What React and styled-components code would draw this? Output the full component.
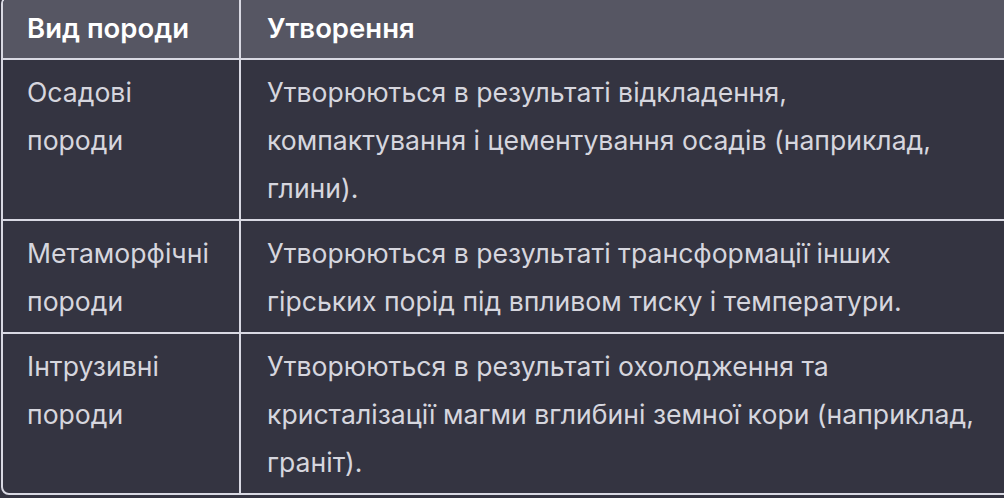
import React from 'react';
import styled, { createGlobalStyle } from 'styled-components';

const GlobalStyle = createGlobalStyle`
  html, body {
    margin: 0;
    padding: 0;
    background: #343441;
    overflow: hidden;
  }
  body {
    font-family: Inter, "Noto Sans", sans-serif;
  }
`;

const Page = styled.div`
  width: 1004px;
  height: 498px;
  overflow: hidden;
  padding-left: 1px;
  box-sizing: border-box;
`;

const Table = styled.table`
  width: 1040px;
  margin-top: -4px;
  border-collapse: separate;
  border-spacing: 0;
  border: 2px solid #d9d9e3;
  border-radius: 8px;
  overflow: hidden;
  table-layout: fixed;
  background: #343441;
`;

const HeadCell = styled.th`
  background: #565663;
  color: #ffffff;
  font-weight: 600;
  font-size: 27.5px;
  line-height: 48px;
  text-align: left;
  white-space: nowrap;
  padding: 6px 26px 6px ${p => (p.$first ? '24px' : '26px')};
  border-left: ${p => (p.$first ? 'none' : '2px solid #d9d9e3')};
`;

const Cell = styled.td`
  color: #d6d6de;
  font-size: 26.6px;
  line-height: 48px;
  vertical-align: top;
  white-space: nowrap;
  padding: 8px 26px 7px ${p => (p.$first ? '24px' : '26px')};
  border-top: 2px solid #d9d9e3;
  border-left: ${p => (p.$first ? 'none' : '2px solid #d9d9e3')};
`;

const Line = styled.span`
  display: block;
`;

const rows = [
  {
    kind: ['Осадові', 'породи'],
    text: [
      'Утворюються в результаті відкладення,',
      'компактування і цементування осадів (наприклад,',
      'глини).',
    ],
  },
  {
    kind: ['Метаморфічні', 'породи'],
    text: [
      'Утворюються в результаті трансформації інших',
      'гірських порід під впливом тиску і температури.',
    ],
  },
  {
    kind: ['Інтрузивні', 'породи'],
    text: [
      'Утворюються в результаті охолодження та',
      'кристалізації магми вглибині земної кори (наприклад,',
      'граніт).',
    ],
  },
];

export default function App() {
  return (
    <Page>
      <GlobalStyle />
      <Table>
        <colgroup>
          <col style={{ width: 236 }} />
          <col />
        </colgroup>
        <thead>
          <tr>
            <HeadCell $first>Вид породи</HeadCell>
            <HeadCell>Утворення</HeadCell>
          </tr>
        </thead>
        <tbody>
          {rows.map(row => (
            <tr key={row.kind[0]}>
              <Cell $first>
                {row.kind.map(l => <Line key={l}>{l}</Line>)}
              </Cell>
              <Cell>
                {row.text.map(l => <Line key={l}>{l}</Line>)}
              </Cell>
            </tr>
          ))}
        </tbody>
      </Table>
    </Page>
  );
}
